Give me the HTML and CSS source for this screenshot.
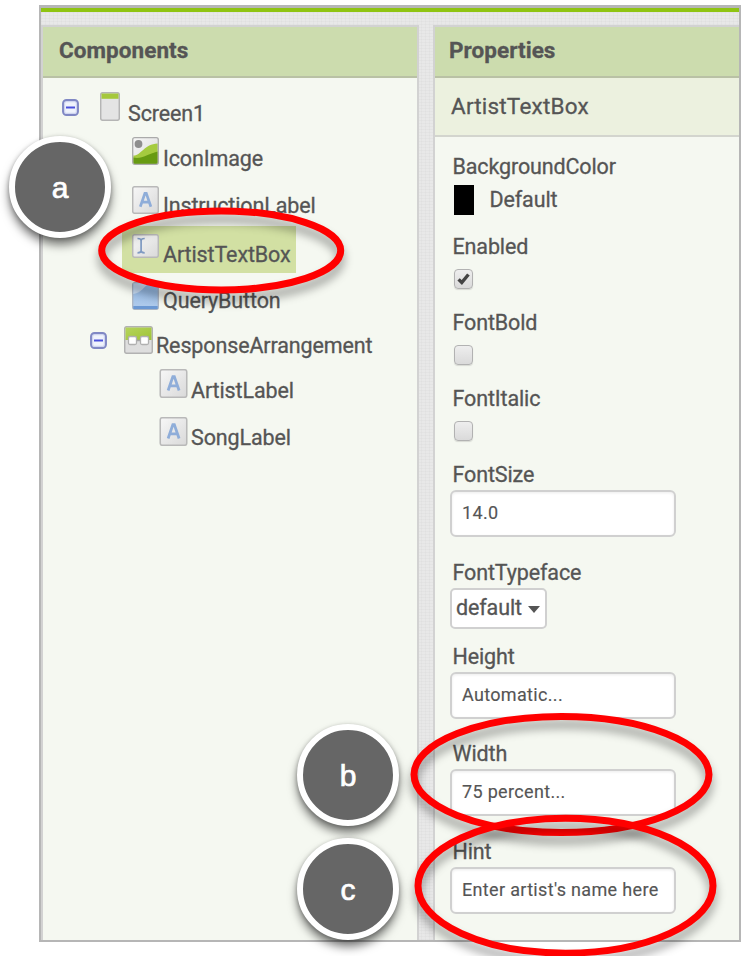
FILE: index.html
```html
<!DOCTYPE html>
<html lang="en">
<head>
<meta charset="utf-8">
<title>Components and Properties</title>
<link rel="stylesheet" href="styles.css">
</head>
<body>
<svg class="defs" width="0" height="0" aria-hidden="true">
  <defs>
    <linearGradient id="gGrey" x1="0" y1="0" x2="1" y2="1"><stop offset="0" stop-color="#f7f7f7"/><stop offset="1" stop-color="#d9d9d9"/></linearGradient>
    <linearGradient id="gBlue" x1="0" y1="0" x2="0" y2="1"><stop offset="0" stop-color="#8db4e2"/><stop offset="1" stop-color="#b3cdec"/></linearGradient>
    <linearGradient id="gGreen" x1="0" y1="0" x2="1" y2="1"><stop offset="0" stop-color="#b5d45c"/><stop offset="1" stop-color="#9fc435"/></linearGradient>
    <symbol id="minus" viewBox="0 0 17 17"><rect x="1" y="1" width="15" height="15" rx="3.500" fill="#cfd5f0" stroke="#8088c4" stroke-width="1.900"/><rect x="3.200" y="3.200" width="10.600" height="10.600" rx="1" fill="#f0f3fc"/><path d="M4 8.500H13" stroke="#4a50dc" stroke-width="2"/></symbol>
    <symbol id="label" viewBox="0 0 27 28"><rect x=".7" y=".7" width="25.600" height="26.600" rx="2" fill="url(#gGrey)" stroke="#b9b9b9" stroke-width="1.500"/><path d="M8.300 20.800 12.900 7.300h1.400L18.900 20.800M10 16.200h7.200" fill="none" stroke="#8fadd9" stroke-width="2.700"/></symbol>
  </defs>
</svg>

<main class="window">
  <div class="stripe"></div>
  <div class="columns">
    <section class="panel components">
      <h2 class="panel-title">Components</h2>
      <ul class="tree">
        <li class="row root"><svg class="toggle"><use href="#minus"/></svg>
          <svg class="icon screen" viewBox="0 0 20 29"><rect x=".7" y=".7" width="18.600" height="27.600" rx="2" fill="#e4e4e4" stroke="#b5b5b5" stroke-width="1.500"/><path d="M1.500 1.500h17v5.300h-17z" fill="#a5c83c"/></svg>
          <span class="name">Screen1</span></li>
        <li class="row child r2">
          <svg class="icon" viewBox="0 0 27 28"><rect x=".7" y=".7" width="25.600" height="26.600" rx="2" fill="url(#gGrey)"/><circle cx="6.500" cy="7" r="3.900" fill="#8e8e8e"/><path d="M1.300 18.500C9 19 12 7 25.700 6.500V27H1.300z" fill="#a5cb3f"/><path d="M1.300 20.500C10 22.500 15 17 25.700 14.500V27H1.300z" fill="#679b12"/><rect x=".7" y=".7" width="25.600" height="26.600" rx="2" fill="none" stroke="#aaa" stroke-width="1.300"/></svg>
          <span class="name">IconImage</span></li>
        <li class="row child r3"><svg class="icon"><use href="#label"/></svg><span class="name">InstructionLabel</span></li>
        <li class="row child r4 selected">
          <svg class="icon textbox" viewBox="0 0 27 24"><rect x=".7" y=".7" width="25.600" height="22.600" rx="2" fill="url(#gGrey)" stroke="#b9b9b9" stroke-width="1.500"/><path d="M5.500 4.500c2.500 0 3.600.6 3.600 2v10.300c0 1.500-1.100 2-3.600 2M12.700 4.500c-2.500 0-3.600.6-3.600 2v10.300c0 1.500 1.100 2 3.600 2" fill="none" stroke="#7f9ac2" stroke-width="1.700"/></svg>
          <span class="name">ArtistTextBox</span></li>
        <li class="row child r5">
          <svg class="icon" viewBox="0 0 27 28"><rect x=".7" y=".7" width="25.600" height="26.600" rx="2" fill="url(#gBlue)" stroke="#aab4c2" stroke-width="1.300"/><path d="M1.300 1.300h16C12 4 10 11 1.300 12z" fill="#c7daf0"/><path d="M1.300 24h24.400v3H1.300z" fill="#6b98d3"/></svg>
          <span class="name">QueryButton</span></li>
        <li class="row group r6"><svg class="toggle"><use href="#minus"/></svg>
          <svg class="icon arrangement" viewBox="0 0 29 28"><rect x=".7" y=".7" width="27.600" height="26.600" rx="2" fill="#dedede" stroke="#b2b2b2" stroke-width="1.500"/><path d="M1.500 1.500h26V14h-26z" fill="url(#gGreen)"/><path d="M10 14.500h8" stroke="#a5a5a5" stroke-width="1.500"/><rect x="4.500" y="10.500" width="8" height="8" rx="1.500" fill="#fff" stroke="#b0b0b0" stroke-width="1.300"/><rect x="16.500" y="10.500" width="8" height="8" rx="1.500" fill="#fff" stroke="#b0b0b0" stroke-width="1.300"/></svg>
          <span class="name">ResponseArrangement</span></li>
        <li class="row grandchild r7"><svg class="icon"><use href="#label"/></svg><span class="name">ArtistLabel</span></li>
        <li class="row grandchild r8"><svg class="icon"><use href="#label"/></svg><span class="name">SongLabel</span></li>
      </ul>
    </section>

    <section class="panel properties">
      <h2 class="panel-title">Properties</h2>
      <div class="subject">ArtistTextBox</div>
      <div class="fields">
        <div class="field color"><label>BackgroundColor</label><div class="swatch-row"><i class="swatch"></i><span>Default</span></div></div>
        <div class="field check"><label>Enabled</label><span class="box"><svg viewBox="0 0 19 19"><path d="M4 10.500 7.600 14 15 5" fill="none" stroke="#444" stroke-width="3.800"/></svg></span></div>
        <div class="field check"><label>FontBold</label><span class="box"></span></div>
        <div class="field check"><label>FontItalic</label><span class="box"></span></div>
        <div class="field text"><label>FontSize</label><div class="input">14.0</div></div>
        <div class="field typeface"><label>FontTypeface</label><div class="select">default<i class="caret"></i></div></div>
        <div class="field text"><label>Height</label><div class="input">Automatic...</div></div>
        <div class="field text"><label>Width</label><div class="input">75 percent...</div></div>
        <div class="field text"><label>Hint</label><div class="input">Enter artist's name here</div></div>
      </div>
    </section>
  </div>
</main>

<div class="badge badge-a">a</div>
<div class="badge badge-b">b</div>
<div class="badge badge-c">c</div>
<svg class="rings" width="746" height="956" viewBox="0 0 746 956">
  <ellipse cx="221.200" cy="250.500" rx="119.500" ry="39.500"/>
  <ellipse cx="561.500" cy="774.500" rx="147.500" ry="58"/>
  <ellipse cx="565.500" cy="885.700" rx="147.500" ry="67.500"/>
</svg>
</body>
</html>
```
FILE: styles.css
```css
* { box-sizing: border-box; }
body {
  margin: 0;
  position: relative;
  width: 746px;
  height: 956px;
  overflow: hidden;
  background: #fff;
  color: #555;
  font: 21.5px/24px Roboto, "Liberation Sans", sans-serif;
  letter-spacing: -.13px;
  -webkit-text-stroke: .3px currentColor;
}
.defs { position: absolute; }
.window {
  margin: 5px 0 0 39px;
  width: 702px;
  height: 937px;
  border: 2px solid #b6b6b6;
  border-top-width: 3px;
  display: flex;
  flex-direction: column;
  background-color: #e8e8e8;
  background-image:
    repeating-linear-gradient(90deg, rgba(0,0,0,.02) 0 1px, transparent 1px 4px),
    repeating-linear-gradient(0deg, rgba(0,0,0,.02) 0 1px, transparent 1px 3px);
}
.stripe { height: 4px; background: #8fc412; flex: none; }
.columns { flex: 1; display: flex; gap: 14px; padding-top: 13px; }
.panel {
  border: 2px solid #d2d2d2;
  border-bottom: 0;
  background: #f5f8f1;
}
.components { width: 378px; }
.properties { flex: 1; border-right: 0; }
.panel-title {
  margin: 0;
  height: 51px;
  padding: 11px 0 0 16px;
  background: #ccdcae;
  border-bottom: 2px solid #b9c1a5;
  font-size: 22.5px;
  line-height: 24px;
  font-weight: 700;
  letter-spacing: .05px;
}
.properties .panel-title { padding-left: 14px; }

.tree { list-style: none; margin: 0; padding: 7px 0 0; }
.row { display: flex; align-items: flex-start; height: 46px; }
.name { padding-top: 16px; }
.root .name, .selected .name { padding-top: 17px; }
.icon { width: 27px; height: 28px; margin: 7px 4px 0 10px; flex: none; }
.toggle { width: 17px; height: 17px; flex: none; }
.root { padding-left: 19px; }
.root .toggle { margin-top: 14px; }
.root .icon { width: 20px; height: 29px; margin: 7px 8px 0 21px; }
.child { margin-left: 79px; width: 174px; }
.r2 { height: 47px; }
.r2 .icon { margin-top: 6px; }
.r3 { height: 48px; }
.r3 .icon { margin-top: 8px; }
.selected { background: #d2e0a3; height: 47px; }
.textbox { height: 24px; margin-top: 8px; }
.r5 { height: 45px; }
.r5 .icon { margin-top: 9px; }
.group { padding-left: 47px; height: 45px; }
.group .toggle { margin-top: 14px; }
.arrangement { width: 29px; margin: 8px 3px 0 17px; }
.grandchild { padding-left: 106px; }
.r7 { height: 47px; }
.r7 .icon, .r8 .icon { width: 29px; height: 29px; margin-top: 6px; margin-right: 3px; }
.r8 .icon { margin-top: 7px; }

.subject {
  height: 59px;
  padding: 16px 0 0 16px;
  background: #ecf1df;
  border-bottom: 2px solid #d3d5ce;
  font-size: 22.5px;
  letter-spacing: .2px;
}
.fields { padding: 17px 0 0 15px; }
.field { height: 97.700px; padding-left: 2.500px; }
.field label { display: block; height: 24px; line-height: 26px; }
.color { height: 80px; }
.swatch-row { display: flex; height: 26px; margin-top: 9px; line-height: 26px; }
.swatch { width: 20px; height: 30px; margin: -2px 16px 0 1px; background: #000; }
.check { height: 76px; }
.box {
  display: block;
  width: 19px;
  height: 20px;
  margin: 11px 0 0 1px;
  border: 1.500px solid #b2b2b2;
  border-radius: 4px;
  background: linear-gradient(#eee, #dadada);
  box-shadow: 0 1px 1px rgba(0,0,0,.12);
}
.box svg { display: block; width: 17px; height: 17px; }
.input {
  width: 226px;
  height: 47px;
  margin: 4px 0 0 -2.500px;
  padding: 9px 0 0 10px;
  border: 2px solid #d0d0d0;
  border-radius: 6px;
  background: #fff;
  box-shadow: inset 0 1px 3px rgba(0,0,0,.08);
  font-size: 18px;
  line-height: 24px;
  letter-spacing: .33px;
  white-space: nowrap;
  -webkit-text-stroke-width: .15px;
}
.typeface { height: 84px; }
.select {
  display: flex;
  width: 97px;
  height: 41px;
  margin: 4px 0 0 -2.500px;
  padding: 6px 0 0 4px;
  border: 2px solid #d0d0d0;
  border-radius: 5px;
  background: #fff;
}
.caret {
  margin: 10px 0 0 6px;
  width: 0;
  height: 0;
  border: 6px solid transparent;
  border-top: 7px solid #555;
  border-bottom: 0;
}

/* Callouts laid over the panels */
.badge {
  position: absolute;
  width: 102px;
  height: 102px;
  border: 6.500px solid #fff;
  border-radius: 50%;
  background: #666;
  color: #fff;
  font: 30px/92px "Liberation Sans", sans-serif;
  -webkit-text-stroke: .7px #fff;
  text-align: center;
  box-shadow: 0 7px 10px rgba(0,0,0,.5), 0 1px 4px rgba(0,0,0,.25);
}
.badge-a { left: 9px; top: 136px; }
.badge-b { left: 297px; top: 724px; }
.badge-c { left: 297px; top: 838px; }
.rings { position: absolute; left: 0; top: 0; }
.rings ellipse {
  fill: none;
  stroke: #f00;
  stroke-width: 7;
  filter: drop-shadow(0 8px 5px rgba(0,0,0,.38));
}
```
